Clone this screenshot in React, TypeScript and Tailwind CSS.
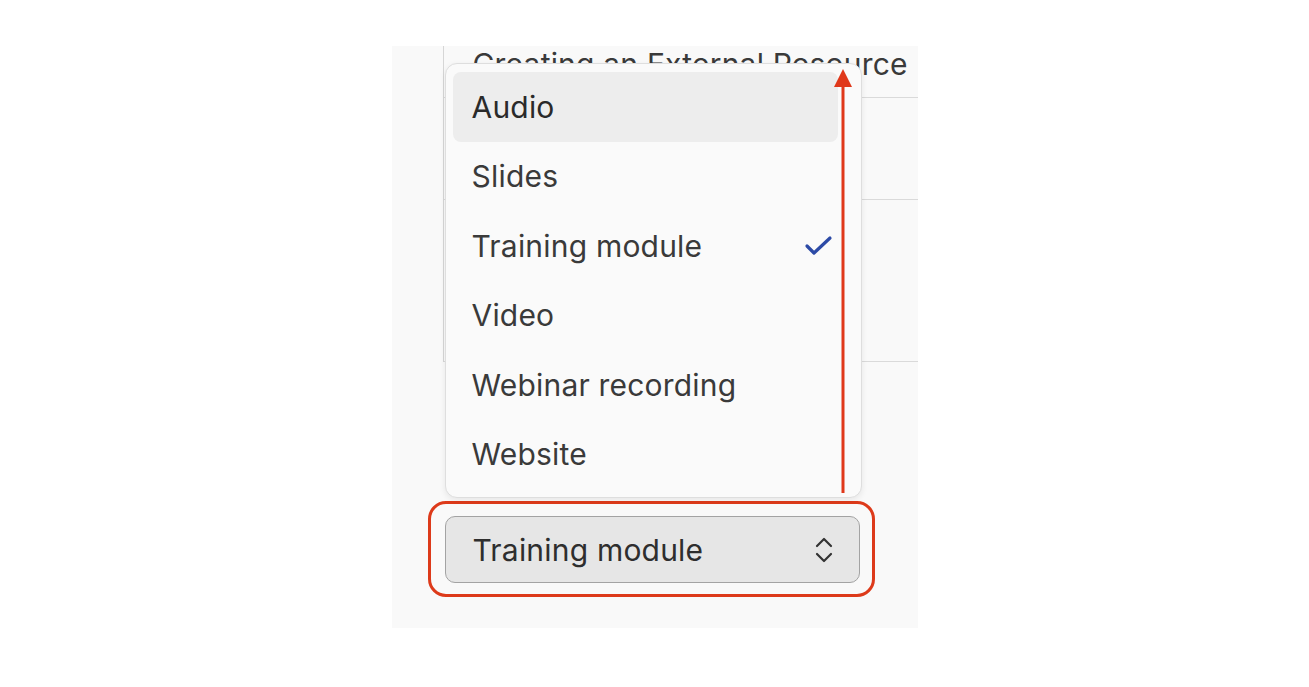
import React from "react";

const items = ["Audio", "Slides", "Training module", "Video", "Webinar recording", "Website"];

export default function App() {
  return (
    <div className="w-[1309px] h-[687px] bg-white overflow-hidden" style={{ fontFamily: "Inter, 'Noto Sans', sans-serif" }}>
      <div className="relative mx-auto mt-[46px] w-[526px] h-[582px] bg-[#f9f9f9] text-[#333333]">
        {/* background content */}
        <div className="ml-[51px] border-l border-[#d6d6d6]">
          <div className="h-[52px] border-b border-[#dadada] pl-[29px] pt-[1px] text-[30px] leading-[34px] tracking-[0.2px] whitespace-nowrap text-[#3a3a3a]">
            Creating an External Resource
          </div>
          <div className="h-[102px] border-b border-[#dadada]" />
          <div className="h-[162px] border-b border-[#dadada]" />
        </div>

        {/* select with highlight outline */}
        <div className="ml-[36px] mt-[139px] w-[447px] rounded-[18px] border-[3px] border-[#dd3a1a] pt-[12px] pb-[11px] pl-[14px]">
          <div className="flex h-[67px] w-[415px] items-center justify-between rounded-[10px] border border-[#a3a3a3] bg-[#e6e6e6] pl-[27px] pr-[26px]">
            <span className="text-[30px] leading-[34px] tracking-[0.2px] text-[#2e2e2e]">Training module</span>
            <svg width="18" height="28" viewBox="0 0 18 28" fill="none" stroke="#333" strokeWidth="2.2" strokeLinecap="round" strokeLinejoin="round">
              <polyline points="2,10 9,3 16,10" />
              <polyline points="2,18 9,25 16,18" />
            </svg>
          </div>
        </div>

        {/* dropdown menu */}
        <div className="absolute left-[53px] top-[17px] w-[417px] rounded-[12px] border border-[#dedede] bg-[#fafafa] pl-[7px] pr-[23px] pt-[8px] pb-[8px] shadow-[0_2px_6px_rgba(0,0,0,0.08)]">
          {items.map((it, i) => (
            <div
              key={it}
              className={
                "flex h-[69.5px] items-center justify-between rounded-[8px] pl-[19px] pr-[4px] text-[30px] leading-[34px] tracking-[0.2px] " +
                (i === 0 ? "bg-[#ededed] text-[#2a2a2a]" : "text-[#3a3a3a]")
              }
            >
              <span>{it}</span>
              {it === "Training module" && (
                <svg width="30" height="22" viewBox="0 0 30 22" fill="none" stroke="#2c4aa6" strokeWidth="3.2" strokeLinecap="round" strokeLinejoin="round">
                  <polyline points="3,11 10,18 26,3" />
                </svg>
              )}
            </div>
          ))}
        </div>

        {/* red arrow annotation */}
        <svg className="absolute left-[440px] top-[22px]" width="22" height="426" viewBox="0 0 22 426">
          <line x1="11" y1="16" x2="11" y2="425" stroke="#e0381a" strokeWidth="3" />
          <polygon points="11,1 2,19 20,19" fill="#e0381a" />
        </svg>
      </div>
    </div>
  );
}
